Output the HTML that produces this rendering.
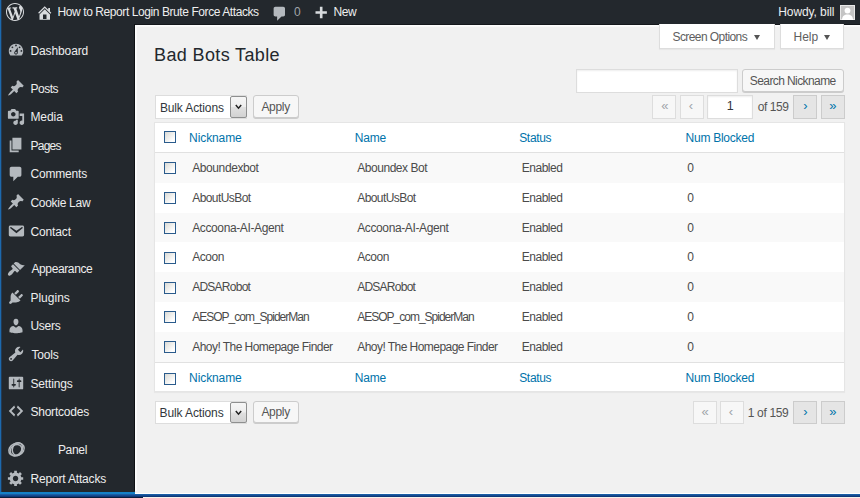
<!DOCTYPE html>
<html><head><meta charset="utf-8"><title>Bad Bots Table</title>
<style>
*{box-sizing:border-box;margin:0;padding:0}
html,body{width:860px;height:498px;overflow:hidden;background:#f1f1f1;font-family:"Liberation Sans",sans-serif;font-size:12px;color:#555}
.a{position:absolute}
.t{position:absolute;white-space:nowrap}
#bar{left:0;top:0;width:860px;height:24px;background:#23282d}
#side{left:0;top:24px;width:135px;height:468px;background:#23282d}
#lb{left:0;top:0;width:2px;height:492px;background:linear-gradient(90deg,#1c69ad 0,#1c69ad 1px,#213a55 1px,#213a55 2px)}
.tab{position:absolute;top:24px;height:25px;background:#fff;border:1px solid #ddd;border-top:none;box-shadow:0 1px 1px rgba(0,0,0,.04)}
.btn{position:absolute;height:23px;background:#f7f7f7;border:1px solid #ccc;border-radius:3px;box-shadow:0 1px 0 #ccc}
.pg{position:absolute;width:24px;height:24px;border:1px solid #ddd;background:#f7f7f7}
.pg.on{border-color:#ccc;background:#e5e5e5}
.inp{position:absolute;background:#fff;border:1px solid #ddd;box-shadow:inset 0 1px 2px rgba(0,0,0,.07)}
#tbl{left:154px;top:122px;width:691px;height:270px;background:#fff;border:1px solid #e5e5e5;box-shadow:0 1px 1px rgba(0,0,0,.04)}
.row{position:absolute;left:155px;width:689px}
.row.alt{background:#f9f9f9}
.cb{position:absolute;left:164px;width:12px;height:12px;border:1px solid #2a5b8c;background:linear-gradient(135deg,#dadad6,#f3f3f1 55%,#fff 80%)}
.sel{position:absolute;left:230px;width:17px;height:22px;border:1px solid #8e8f8f;border-radius:2px;background:linear-gradient(#f6f6f6,#eeeeee 48%,#e0e0e0 52%,#d2d2d2)}
.tri{width:0;height:0;border-left:3.3px solid transparent;border-right:3.3px solid transparent;border-top:5px solid #555}
svg{position:absolute;overflow:visible}
</style></head><body>
<div id="bar" class="a"></div>
<div id="side" class="a"></div>
<div id="lb" class="a"></div>
<div class="a" style="left:134px;top:24px;width:1px;height:467px;background:#0e1114"></div>
<div class="a" style="left:135px;top:24px;width:725px;height:1px;background:#15181c"></div>
<div class="a" style="left:135px;top:25px;width:725px;height:2px;background:linear-gradient(#fff,#f8f8f8)"></div>
<div class="a" style="left:135px;top:25px;width:2px;height:466px;background:linear-gradient(90deg,#fff,#f8f8f8)"></div>
<svg style="left:6.6px;top:41.2px" width="18" height="18" viewBox="0 0 20 20"><path fill="#b4b9be" fill-rule="evenodd" d="M3.76 16h12.48c1.1-1.37 1.76-3.11 1.76-5 0-4.42-3.58-8-8-8s-8 3.58-8 8c0 1.89.66 3.63 1.76 5zM10 4c.55 0 1 .45 1 1s-.45 1-1 1-1-.45-1-1 .45-1 1-1zM6 6c.55 0 1 .45 1 1s-.45 1-1 1-1-.45-1-1 .45-1 1-1zm8 0c.55 0 1 .45 1 1s-.45 1-1 1-1-.45-1-1 .45-1 1-1zm-5.370 5.550L12 7v6c0 1.100-.9 2-2 2s-2-.9-2-2c0-.57.240-1.080.630-1.450zM4 10c.55 0 1 .45 1 1s-.45 1-1 1-1-.45-1-1 .45-1 1-1zm12 0c.55 0 1 .45 1 1s-.45 1-1 1-1-.45-1-1 .45-1 1-1zm-5 3c0-.55-.45-1-1-1s-1 .45-1 1 .45 1 1 1 1-.45 1-1z"/></svg>
<svg style="left:6.6px;top:79.1px" width="18" height="18" viewBox="0 0 20 20"><path fill="#b4b9be" fill-rule="evenodd" d="M10.440 3.020l1.820-1.820 6.360 6.350-1.830 1.820c-1.050-.68-2.480-.57-3.410.36l-.75.75c-.92.93-1.040 2.350-.35 3.410l-1.830 1.820-2.410-2.410-2.800 2.790c-.42.42-3.380 2.710-3.800 2.290s1.860-3.390 2.280-3.810l2.790-2.790L4.100 9.360l1.830-1.820c1.050.69 2.480.57 3.400-.36l.75-.75c.93-.92 1.050-2.350.36-3.410z"/></svg>
<svg style="left:6.6px;top:107.6px" width="18" height="18" viewBox="0 0 20 20"><path fill="#b4b9be" fill-rule="evenodd" d="M13 11V4c0-.55-.45-1-1-1h-1.670L9 1H5L3.670 3H2c-.55 0-1 .45-1 1v7c0 .55.45 1 1 1h10c.55 0 1-.45 1-1zM7 4.500c1.380 0 2.500 1.120 2.500 2.500S8.380 9.500 7 9.500 4.500 8.380 4.500 7 5.620 4.500 7 4.500zM14 6h5v10.500c0 1.380-1.120 2.500-2.500 2.500S14 17.880 14 16.500s1.120-2.500 2.500-2.500c.17 0 .34.020.5.050V9h-3V6zm-4 8.050V13h2v3.500c0 1.380-1.120 2.500-2.500 2.500S7 17.880 7 16.500 8.120 14 9.500 14c.17 0 .34.020.5.050z"/></svg>
<svg style="left:6.6px;top:136.2px" width="18" height="18" viewBox="0 0 20 20"><path fill="#b4b9be" fill-rule="evenodd" d="M6 15V2h10v13H6zm-1 1h8v2H3V5h2v11z"/></svg>
<svg style="left:6.6px;top:164.6px" width="18" height="18" viewBox="0 0 20 20"><path fill="#b4b9be" fill-rule="evenodd" d="M5 2h9c1.100 0 2 .9 2 2v7c0 1.100-.9 2-2 2h-2l-5 5v-5H5c-1.100 0-2-.9-2-2V4c0-1.100.9-2 2-2z"/></svg>
<svg style="left:6.6px;top:193.2px" width="18" height="18" viewBox="0 0 20 20"><path fill="#b4b9be" fill-rule="evenodd" d="M10.440 3.020l1.820-1.820 6.360 6.350-1.830 1.820c-1.050-.68-2.480-.57-3.410.36l-.75.75c-.92.93-1.040 2.350-.35 3.410l-1.830 1.820-2.410-2.410-2.800 2.790c-.42.42-3.380 2.710-3.800 2.290s1.860-3.390 2.280-3.810l2.790-2.790L4.100 9.360l1.830-1.820c1.050.69 2.480.57 3.400-.36l.75-.75c.93-.92 1.050-2.350.36-3.410z"/></svg>
<svg style="left:6.6px;top:221.8px" width="18" height="18" viewBox="0 0 20 20"><path fill="#b4b9be" fill-rule="evenodd" d="M3.870 4h13.250C18.370 4 19 4.590 19 5.790v8.420c0 1.190-.63 1.790-1.880 1.790H3.870c-1.250 0-1.880-.6-1.880-1.790V5.790c0-1.200.63-1.790 1.880-1.790zm6.620 8.600l6.740-5.530c.24-.2.43-.66.13-1.070-.29-.41-.82-.42-1.170-.17l-5.700 3.860L4.800 5.830c-.35-.25-.88-.24-1.170.17-.3.41-.11.87.13 1.070z"/></svg>
<svg style="left:6.6px;top:259.6px" width="18" height="18" viewBox="0 0 20 20"><path fill="#b4b9be" fill-rule="evenodd" d="M14.480 11.060L7.410 3.990l1.500-1.500c.5-.56 2.300-.47 3.510.32 1.210.8 1.430 1.280 2.910 2.100 1.180.64 2.450 1.260 4.450.85zm-.71.710L6.700 4.700 4.930 6.470c-.39.39-.39 1.020 0 1.410l1.060 1.060c.39.39.39 1.030 0 1.420-.6.6-1.430 1.110-2.210 1.690-.35.26-.7.53-1.010.84C1.430 14.230.4 16.080 1.400 17.070c.99 1 2.840-.03 4.180-1.360.31-.31.58-.66.85-1.020.57-.78 1.080-1.610 1.690-2.210.39-.39 1.020-.39 1.410 0l1.060 1.060c.39.39 1.020.39 1.410 0z"/></svg>
<svg style="left:6.6px;top:288.2px" width="18" height="18" viewBox="0 0 20 20"><path fill="#b4b9be" fill-rule="evenodd" d="M13.110 4.360L9.870 7.600 8 5.730l3.240-3.240c.35-.34 1.050-.2 1.560.32.52.51.66 1.210.31 1.550zm-8 1.770l.91-1.120 9.010 9.010-1.190.84c-.71.71-2.630 1.160-3.820 1.160H6.140L4.900 17.260c-.59.59-1.540.59-2.120 0-.59-.58-.59-1.530 0-2.120L4.020 13.900v-3.880c0-1.130.39-3.190 1.090-3.890zm7.260 3.970l3.240-3.240c.34-.35 1.040-.21 1.550.31.52.51.66 1.210.31 1.550l-3.240 3.250z"/></svg>
<svg style="left:6.6px;top:316.7px" width="18" height="18" viewBox="0 0 20 20"><path fill="#b4b9be" fill-rule="evenodd" d="M10 9.250c-2.270 0-2.730-3.440-2.730-3.440C7 4.020 7.820 2 9.970 2c2.160 0 2.980 2.020 2.710 3.810 0 0-.41 3.440-2.680 3.440zm0 2.570L12.720 10c2.390 0 4.520 2.330 4.520 4.530v2.490s-3.650 1.130-7.240 1.130c-3.650 0-7.240-1.130-7.240-1.130v-2.490c0-2.250 1.940-4.480 4.470-4.480z"/></svg>
<svg style="left:6.6px;top:345.2px" width="18" height="18" viewBox="0 0 20 20"><path fill="#b4b9be" fill-rule="evenodd" d="M16.680 9.770c-1.340 1.340-3.300 1.670-4.950.99l-5.410 6.520c-.99.99-2.590.99-3.580 0s-.99-2.590 0-3.570l6.520-5.420c-.68-1.650-.35-3.610.99-4.950 1.280-1.280 3.120-1.620 4.720-1.060l-2.890 2.890 2.820 2.820 2.860-2.870c.53 1.580.18 3.390-1.080 4.650zM3.810 16.210c.4.39 1.040.39 1.430 0 .4-.4.4-1.040 0-1.430-.39-.4-1.030-.4-1.430 0-.39.39-.39 1.030 0 1.430z"/></svg>
<svg style="left:6.6px;top:373.8px" width="18" height="18" viewBox="0 0 20 20"><path fill="#b4b9be" fill-rule="evenodd" d="M18 16V4c0-.55-.45-1-1-1H3c-.55 0-1 .45-1 1v12c0 .55.45 1 1 1h14c.55 0 1-.45 1-1zM8 11h1c.55 0 1 .45 1 1s-.45 1-1 1H8v1.500c0 .28-.22.5-.5.5s-.5-.22-.5-.5V13H6c-.55 0-1-.45-1-1s.45-1 1-1h1V5.500c0-.28.220-.5.500-.5s.5.220.5.500V11zm5-2h-1c-.55 0-1-.45-1-1s.45-1 1-1h1V5.500c0-.28.220-.5.500-.5s.5.220.5.500V7h1c.55 0 1 .45 1 1s-.45 1-1 1h-1v5.500c0 .28-.22.5-.5.5s-.5-.22-.5-.5V9z"/></svg>
<svg style="left:6.6px;top:402.4px" width="18" height="18" viewBox="0 0 20 20"><path fill="#b4b9be" fill-rule="evenodd" d="M9 6l-4 4 4 4-1 2-6-6 6-6zm2 8l4-4-4-4 1-2 6 6-6 6z"/></svg>
<svg style="left:6.6px;top:468.9px" width="18" height="18" viewBox="0 0 20 20"><path fill="#b4b9be" fill-rule="evenodd" d="M18 12h-2.180c-.17.7-.44 1.350-.81 1.930l1.540 1.540-2.100 2.100-1.540-1.540c-.58.36-1.230.63-1.910.79V19H8v-2.180c-.68-.16-1.330-.43-1.910-.79l-1.540 1.540-2.120-2.120 1.540-1.540c-.36-.58-.63-1.230-.79-1.910H1V9.030h2.170c.16-.7.44-1.350.8-1.940L2.430 5.550l2.100-2.100 1.540 1.540c.58-.37 1.240-.64 1.930-.81V2h3v2.180c.68.16 1.330.43 1.910.79l1.540-1.540 2.120 2.120-1.540 1.540c.36.59.64 1.240.8 1.940H18V12zm-8.500 1.500c1.660 0 3-1.340 3-3s-1.340-3-3-3-3 1.340-3 3 1.340 3 3 3z"/></svg>
<svg style="left:6.2px;top:2.9px" width="18" height="18" viewBox="0 0 20 20"><path fill="#d8dbde" fill-rule="evenodd" d="M20 10c0-5.510-4.490-10-10-10C4.480 0 0 4.490 0 10c0 5.520 4.480 10 10 10 5.510 0 10-4.480 10-10zM7.780 15.370L4.370 6.220c.55-.02 1.170-.08 1.170-.08.5-.06.44-1.130-.06-1.110 0 0-1.450.11-2.370.11-.18 0-.37 0-.58-.01C4.120 2.690 6.870 1.110 10 1.110c2.330 0 4.450.87 6.050 2.340-.68-.11-1.650.39-1.650 1.580 0 .74.45 1.360.9 2.100.35.61.55 1.360.55 2.460 0 1.490-1.400 5-1.400 5l-3.030-8.370c.54-.02.82-.17.82-.17.5-.05.44-1.250-.06-1.220 0 0-1.440.12-2.380.12-.87 0-2.330-.12-2.330-.12-.5-.03-.56 1.200-.06 1.220l.92.08 1.260 3.410zM17.410 10c.24-.64.74-1.870.43-4.250.7 1.290 1.050 2.710 1.050 4.250 0 3.290-1.730 6.240-4.400 7.780.97-2.590 1.940-5.200 2.920-7.780zM6.100 18.090C3.120 16.650 1.110 13.530 1.110 10c0-1.300.23-2.480.72-3.590C3.250 10.300 4.670 14.200 6.100 18.090zm4.030-6.630l2.580 6.980c-.86.29-1.760.45-2.710.45-.79 0-1.570-.11-2.290-.33.81-2.380 1.620-4.740 2.420-7.100z"/></svg>
<svg style="left:36.2px;top:4.3px" width="17.5" height="17.5" viewBox="0 0 20 20"><path fill="#d8dbde" fill-rule="evenodd" d="M16 8.500l1.530 1.530-1.060 1.060L10 4.620l-6.470 6.470-1.060-1.060L10 2.500l4 4v-2h2v4zm-6-2.460l6 5.990V18H4v-5.970zM12 17v-5H8v5h4z"/></svg>
<svg style="left:270.7px;top:4.8px" width="17.5" height="17.5" viewBox="0 0 20 20"><path fill="#b4b9be" fill-rule="evenodd" d="M5 2h9c1.100 0 2 .9 2 2v7c0 1.100-.9 2-2 2h-2l-5 5v-5H5c-1.100 0-2-.9-2-2V4c0-1.100.9-2 2-2z"/></svg>
<svg style="left:311.5px;top:5.2px" width="17.5" height="17.5" viewBox="0 0 20 20"><path fill="#d8dbde" fill-rule="evenodd" d="M17 7v3h-5v5H9v-5H4V7h5V2h3v5h5z"/></svg>
<svg style="left:7px;top:440px" width="19" height="19" viewBox="0 0 19 19" fill="none" stroke="#b4b9be" stroke-width="1.5"><ellipse cx="9.5" cy="9.5" rx="8" ry="6.2" transform="rotate(-25 9.5 9.5)"/><ellipse cx="9" cy="10" rx="6.2" ry="5" transform="rotate(-35 9 10)"/><ellipse cx="10.5" cy="9" rx="5" ry="6.5" transform="rotate(20 10.5 9)"/></svg>
<svg style="left:840px;top:5px" width="15" height="15" viewBox="0 0 15 15"><rect width="15" height="15" fill="#c4c4c4"/><rect x=".5" y=".5" width="14" height="14" fill="none" stroke="#e8e8e8"/><circle cx="7.5" cy="5.6" r="2.9" fill="#fff"/><path d="M2 15c0-4 2.500-5.600 5.500-5.600S13 11 13 15z" fill="#fff"/></svg>
<div class="tab" style="left:659px;width:116px"></div>
<div class="tab" style="left:780px;width:64px"></div>
<div class="a tri" style="left:754px;top:35px"></div><div class="a tri" style="left:823.7px;top:35px"></div>
<div class="inp" style="left:576px;top:69px;width:162px;height:24px"></div>
<div class="btn" style="left:742px;top:69px;width:102px"></div>

<div class="inp" style="left:155px;top:95px;width:92px;height:24px;box-shadow:none"></div>
<div class="sel" style="top:96px"></div><svg style="left:234.6px;top:104.3px" width="7" height="6" viewBox="0 0 7 6"><polyline points="0.8,1 3.5,4.2 6.2,1" fill="none" stroke="#222" stroke-width="1.5"/></svg>
<div class="btn" style="left:253px;top:95px;width:46px"></div>
<div class="pg" style="left:652px;top:95px"></div>
<div class="pg" style="left:680px;top:95px"></div>
<div class="inp" style="left:707px;top:95px;width:46px;height:24px"></div>
<div class="pg on" style="left:793px;top:95px"></div>
<div class="pg on" style="left:821px;top:95px"></div>

<div id="tbl" class="a"></div>
<div class="a" style="left:155px;top:152px;width:689px;height:1px;background:#e1e1e1"></div>
<div class="a" style="left:155px;top:362px;width:689px;height:1px;background:#e1e1e1"></div>
<div class="row alt" style="top:153.0px;height:29.80px"></div>
<div class="row" style="top:182.8px;height:29.80px"></div>
<div class="row alt" style="top:212.6px;height:29.80px"></div>
<div class="row" style="top:242.4px;height:29.80px"></div>
<div class="row alt" style="top:272.2px;height:29.80px"></div>
<div class="row" style="top:302.0px;height:29.80px"></div>
<div class="row alt" style="top:331.8px;height:29.80px"></div>
<i class="cb" style="top:131.0px"></i>
<i class="cb" style="top:162.3px"></i>
<i class="cb" style="top:192.1px"></i>
<i class="cb" style="top:221.9px"></i>
<i class="cb" style="top:251.7px"></i>
<i class="cb" style="top:281.5px"></i>
<i class="cb" style="top:311.3px"></i>
<i class="cb" style="top:341.1px"></i>
<i class="cb" style="top:372.6px"></i>

<div class="inp" style="left:155px;top:401px;width:92px;height:23px;box-shadow:none"></div>
<div class="sel" style="top:402px;height:21px"></div><svg style="left:234.6px;top:409.6px" width="7" height="6" viewBox="0 0 7 6"><polyline points="0.8,1 3.5,4.2 6.2,1" fill="none" stroke="#222" stroke-width="1.5"/></svg>
<div class="btn" style="left:253px;top:401px;width:46px;height:22px"></div>
<div class="pg" style="left:693px;top:401px;height:23px"></div>
<div class="pg" style="left:720px;top:401px;height:23px"></div>
<div class="pg on" style="left:793px;top:401px;height:23px"></div>
<div class="pg on" style="left:821px;top:401px;height:23px"></div>

<span class="t" style="left:57.6px;top:2.8px;font-size:12px;line-height:18px;color:#eee;letter-spacing:-0.42px">How to Report Login Brute Force Attacks</span>
<span class="t" style="left:294.0px;top:2.8px;font-size:12px;line-height:18px;color:#a0a5aa;letter-spacing:0.00px">0</span>
<span class="t" style="left:333.6px;top:2.8px;font-size:12px;line-height:18px;color:#eee;letter-spacing:-0.50px">New</span>
<span class="t" style="left:778.3px;top:2.8px;font-size:12px;line-height:18px;color:#eee;letter-spacing:-0.10px">Howdy, bill</span>
<span class="t" style="left:30.4px;top:41.8px;font-size:12px;line-height:18px;color:#eee;letter-spacing:-0.10px">Dashboard</span>
<span class="t" style="left:30.4px;top:79.8px;font-size:12px;line-height:18px;color:#eee;letter-spacing:-0.47px">Posts</span>
<span class="t" style="left:30.4px;top:107.8px;font-size:12px;line-height:18px;color:#eee;letter-spacing:-0.05px">Media</span>
<span class="t" style="left:30.4px;top:136.8px;font-size:12px;line-height:18px;color:#eee;letter-spacing:-0.72px">Pages</span>
<span class="t" style="left:30.4px;top:164.8px;font-size:12px;line-height:18px;color:#eee;letter-spacing:-0.16px">Comments</span>
<span class="t" style="left:30.4px;top:193.8px;font-size:12px;line-height:18px;color:#eee;letter-spacing:-0.28px">Cookie Law</span>
<span class="t" style="left:30.4px;top:222.8px;font-size:12px;line-height:18px;color:#eee;letter-spacing:-0.12px">Contact</span>
<span class="t" style="left:31.4px;top:259.8px;font-size:12px;line-height:18px;color:#eee;letter-spacing:-0.37px">Appearance</span>
<span class="t" style="left:30.4px;top:288.8px;font-size:12px;line-height:18px;color:#eee;letter-spacing:0.02px">Plugins</span>
<span class="t" style="left:30.4px;top:316.8px;font-size:12px;line-height:18px;color:#eee;letter-spacing:-0.25px">Users</span>
<span class="t" style="left:31.4px;top:345.8px;font-size:12px;line-height:18px;color:#eee;letter-spacing:-0.17px">Tools</span>
<span class="t" style="left:30.4px;top:374.8px;font-size:12px;line-height:18px;color:#eee;letter-spacing:-0.13px">Settings</span>
<span class="t" style="left:30.4px;top:402.8px;font-size:12px;line-height:18px;color:#eee;letter-spacing:-0.21px">Shortcodes</span>
<span class="t" style="left:30.4px;top:469.8px;font-size:12px;line-height:18px;color:#eee;letter-spacing:-0.17px">Report Attacks</span>
<span class="t" style="left:57.9px;top:440.8px;font-size:12px;line-height:18px;color:#eee;letter-spacing:-0.30px">Panel</span>
<span class="t" style="left:154.1px;top:41.7px;font-size:18px;line-height:27px;color:#23282d;letter-spacing:0.36px">Bad Bots Table</span>
<span class="t" style="left:672.5px;top:28.4px;font-size:12px;line-height:18px;color:#5e5e5e;letter-spacing:-0.58px">Screen Options</span>
<span class="t" style="left:793.6px;top:28.4px;font-size:12px;line-height:18px;color:#5e5e5e;letter-spacing:-0.07px">Help</span>
<span class="t" style="left:749.8px;top:72.3px;font-size:12px;line-height:18px;color:#555;letter-spacing:-0.59px">Search Nickname</span>
<span class="t" style="left:159.9px;top:99.0px;font-size:12px;line-height:18px;color:#32373c;letter-spacing:-0.12px">Bulk Actions</span>
<span class="t" style="left:261.4px;top:98.2px;font-size:12px;line-height:18px;color:#555;letter-spacing:-0.30px">Apply</span>
<span class="t" style="left:726.7px;top:97.4px;font-size:12.5px;line-height:19px;color:#32373c;letter-spacing:0.00px">1</span>
<span class="t" style="left:757.8px;top:98.2px;font-size:12px;line-height:18px;color:#555;letter-spacing:-0.46px">of 159</span>
<span class="t" style="left:661.2px;top:95.8px;font-size:13px;line-height:20px;color:#a0a5aa;letter-spacing:0.00px">«</span>
<span class="t" style="left:688.8px;top:95.8px;font-size:13px;line-height:20px;color:#a0a5aa;letter-spacing:0.00px">‹</span>
<span class="t" style="left:803.2px;top:95.8px;font-size:13px;line-height:20px;color:#0073aa;letter-spacing:0.00px">›</span>
<span class="t" style="left:829.2px;top:95.8px;font-size:13px;line-height:20px;color:#0073aa;letter-spacing:0.00px">»</span>
<span class="t" style="left:701.6px;top:402.1px;font-size:13px;line-height:20px;color:#a0a5aa;letter-spacing:0.00px">«</span>
<span class="t" style="left:728.8px;top:402.1px;font-size:13px;line-height:20px;color:#a0a5aa;letter-spacing:0.00px">‹</span>
<span class="t" style="left:803.2px;top:402.1px;font-size:13px;line-height:20px;color:#0073aa;letter-spacing:0.00px">›</span>
<span class="t" style="left:829.2px;top:402.1px;font-size:13px;line-height:20px;color:#0073aa;letter-spacing:0.00px">»</span>
<span class="t" style="left:159.6px;top:403.7px;font-size:12px;line-height:18px;color:#32373c;letter-spacing:-0.12px">Bulk Actions</span>
<span class="t" style="left:261.4px;top:403.4px;font-size:12px;line-height:18px;color:#555;letter-spacing:-0.30px">Apply</span>
<span class="t" style="left:747.7px;top:403.5px;font-size:12px;line-height:18px;color:#555;letter-spacing:-0.33px">1 of 159</span>
<span class="t" style="left:189.1px;top:128.8px;font-size:12px;line-height:18px;color:#0073aa;letter-spacing:-0.10px">Nickname</span>
<span class="t" style="left:354.8px;top:128.8px;font-size:12px;line-height:18px;color:#0073aa;letter-spacing:-0.23px">Name</span>
<span class="t" style="left:519.2px;top:128.8px;font-size:12px;line-height:18px;color:#0073aa;letter-spacing:-0.32px">Status</span>
<span class="t" style="left:685.6px;top:128.8px;font-size:12px;line-height:18px;color:#0073aa;letter-spacing:-0.26px">Num Blocked</span>
<span class="t" style="left:189.1px;top:369.0px;font-size:12px;line-height:18px;color:#0073aa;letter-spacing:-0.10px">Nickname</span>
<span class="t" style="left:354.8px;top:369.0px;font-size:12px;line-height:18px;color:#0073aa;letter-spacing:-0.23px">Name</span>
<span class="t" style="left:519.2px;top:369.0px;font-size:12px;line-height:18px;color:#0073aa;letter-spacing:-0.32px">Status</span>
<span class="t" style="left:685.6px;top:369.0px;font-size:12px;line-height:18px;color:#0073aa;letter-spacing:-0.26px">Num Blocked</span>
<span class="t" style="left:192.2px;top:158.8px;font-size:12px;line-height:18px;color:#4b4b4b;letter-spacing:-0.40px">Aboundexbot</span>
<span class="t" style="left:357.2px;top:158.8px;font-size:12px;line-height:18px;color:#4b4b4b;letter-spacing:-0.45px">Aboundex Bot</span>
<span class="t" style="left:521.7px;top:158.8px;font-size:12px;line-height:18px;color:#4b4b4b;letter-spacing:-0.47px">Enabled</span>
<span class="t" style="left:687.3px;top:158.8px;font-size:12px;line-height:18px;color:#4b4b4b;letter-spacing:0.00px">0</span>
<span class="t" style="left:192.2px;top:188.8px;font-size:12px;line-height:18px;color:#4b4b4b;letter-spacing:-0.56px">AboutUsBot</span>
<span class="t" style="left:357.2px;top:188.8px;font-size:12px;line-height:18px;color:#4b4b4b;letter-spacing:-0.56px">AboutUsBot</span>
<span class="t" style="left:521.7px;top:188.8px;font-size:12px;line-height:18px;color:#4b4b4b;letter-spacing:-0.47px">Enabled</span>
<span class="t" style="left:687.3px;top:188.8px;font-size:12px;line-height:18px;color:#4b4b4b;letter-spacing:0.00px">0</span>
<span class="t" style="left:192.2px;top:218.8px;font-size:12px;line-height:18px;color:#4b4b4b;letter-spacing:-0.38px">Accoona-AI-Agent</span>
<span class="t" style="left:357.2px;top:218.8px;font-size:12px;line-height:18px;color:#4b4b4b;letter-spacing:-0.38px">Accoona-AI-Agent</span>
<span class="t" style="left:521.7px;top:218.8px;font-size:12px;line-height:18px;color:#4b4b4b;letter-spacing:-0.47px">Enabled</span>
<span class="t" style="left:687.3px;top:218.8px;font-size:12px;line-height:18px;color:#4b4b4b;letter-spacing:0.00px">0</span>
<span class="t" style="left:192.2px;top:247.8px;font-size:12px;line-height:18px;color:#4b4b4b;letter-spacing:-0.42px">Acoon</span>
<span class="t" style="left:357.2px;top:247.8px;font-size:12px;line-height:18px;color:#4b4b4b;letter-spacing:-0.42px">Acoon</span>
<span class="t" style="left:521.7px;top:247.8px;font-size:12px;line-height:18px;color:#4b4b4b;letter-spacing:-0.47px">Enabled</span>
<span class="t" style="left:687.3px;top:247.8px;font-size:12px;line-height:18px;color:#4b4b4b;letter-spacing:0.00px">0</span>
<span class="t" style="left:192.2px;top:277.8px;font-size:12px;line-height:18px;color:#4b4b4b;letter-spacing:-0.75px">ADSARobot</span>
<span class="t" style="left:357.2px;top:277.8px;font-size:12px;line-height:18px;color:#4b4b4b;letter-spacing:-0.75px">ADSARobot</span>
<span class="t" style="left:521.7px;top:277.8px;font-size:12px;line-height:18px;color:#4b4b4b;letter-spacing:-0.47px">Enabled</span>
<span class="t" style="left:687.3px;top:277.8px;font-size:12px;line-height:18px;color:#4b4b4b;letter-spacing:0.00px">0</span>
<span class="t" style="left:192.2px;top:307.8px;font-size:12px;line-height:18px;color:#4b4b4b;letter-spacing:-1.00px">AESOP_com_SpiderMan</span>
<span class="t" style="left:357.2px;top:307.8px;font-size:12px;line-height:18px;color:#4b4b4b;letter-spacing:-1.00px">AESOP_com_SpiderMan</span>
<span class="t" style="left:521.7px;top:307.8px;font-size:12px;line-height:18px;color:#4b4b4b;letter-spacing:-0.47px">Enabled</span>
<span class="t" style="left:687.3px;top:307.8px;font-size:12px;line-height:18px;color:#4b4b4b;letter-spacing:0.00px">0</span>
<span class="t" style="left:192.2px;top:337.8px;font-size:12px;line-height:18px;color:#4b4b4b;letter-spacing:-0.54px">Ahoy! The Homepage Finder</span>
<span class="t" style="left:357.2px;top:337.8px;font-size:12px;line-height:18px;color:#4b4b4b;letter-spacing:-0.54px">Ahoy! The Homepage Finder</span>
<span class="t" style="left:521.7px;top:337.8px;font-size:12px;line-height:18px;color:#4b4b4b;letter-spacing:-0.47px">Enabled</span>
<span class="t" style="left:687.3px;top:337.8px;font-size:12px;line-height:18px;color:#4b4b4b;letter-spacing:0.00px">0</span>

<div class="a" style="left:135px;top:492.5px;width:725px;height:2px;background:#fff"></div>
<div class="a" style="left:0;top:491.5px;width:135px;height:3px;background:#1580c6"></div>
<div class="a" style="left:0;top:494px;width:860px;height:3px;background:linear-gradient(#1c66b0,#0c2f6e)"></div>
<div class="a" style="left:0;top:496.5px;width:143px;height:2px;background:#0a1d3d"></div>
<div class="a" style="left:143px;top:497px;width:717px;height:1px;background:#f5f2ea"></div>
</body></html>
